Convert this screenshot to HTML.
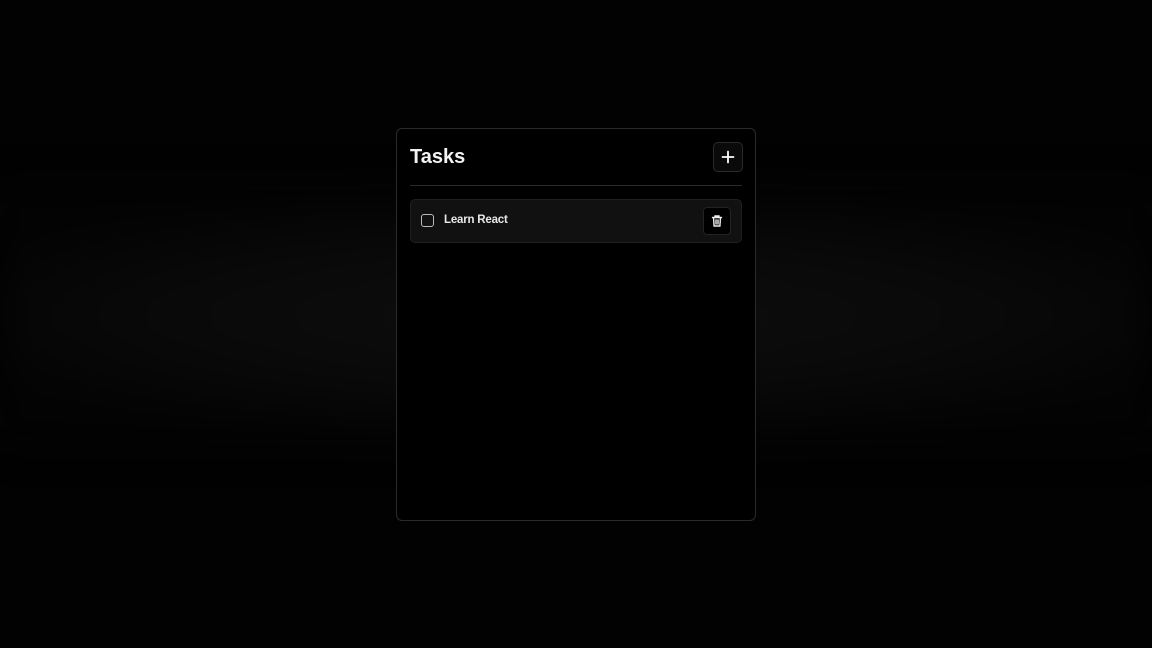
<!DOCTYPE html>
<html><head><meta charset="utf-8"><style>
html,body{margin:0;width:1152px;height:648px;overflow:hidden;background:#020202;font-family:"Liberation Sans",sans-serif}
.bg{position:absolute;left:0;top:190px;width:1152px;height:250px;background:radial-gradient(ellipse 60% 50% at 50% 50%,#0e0e0e 0%,#090909 60%,#030303 100%);filter:blur(20px)}
.card{position:absolute;left:396px;top:128px;width:358px;height:391px;border:1px solid #2a2a2a;border-radius:6px;background:#000}
.title{position:absolute;left:13px;top:17px;color:#f2f2f2;font-size:20px;font-weight:bold}
.add{position:absolute;left:316px;top:13px;width:28px;height:28px;border:1px solid #2a2a2a;border-radius:5px;background:#0a0a0a}
.hr{position:absolute;left:13px;top:56px;width:332px;height:1px;background:#2a2a2a}
.row{position:absolute;left:13px;top:70px;width:330px;height:42px;border:1px solid #1f1f1f;border-radius:5px;background:#111}
.cb{position:absolute;left:10px;top:14px;width:11px;height:11px;border:1.5px solid #bbb;border-radius:3px}
.lbl{position:absolute;left:33px;top:14px;color:#e8e8e8;font-size:11.5px;font-weight:bold;letter-spacing:-0.2px}
.del{position:absolute;left:292px;top:7px;width:26px;height:26px;border:1px solid #222;border-radius:4px;background:#000}
</style></head><body>
<div class="bg"></div>
<div class="card">
<div class="title">Tasks</div>
<div class="add"><svg width="28" height="28" viewBox="0 0 28 28"><path d="M14 8.5v11M8.5 14h11" stroke="#fff" stroke-width="1.8" stroke-linecap="round"/></svg></div>
<div class="hr"></div>
<div class="row"><div class="cb"></div><div class="lbl">Learn React</div>
<div class="del"><svg width="26" height="26" viewBox="0 0 26 26" fill="none" stroke="#eee" stroke-width="1.4" stroke-linecap="round"><path d="M8.5 9.5h9M11 9.5V8h4v1.5M9.5 9.5l.6 8.5h5.8l.6-8.5M12 12v4M14 12v4"/></svg></div>
</div>
</div>
</body></html>
